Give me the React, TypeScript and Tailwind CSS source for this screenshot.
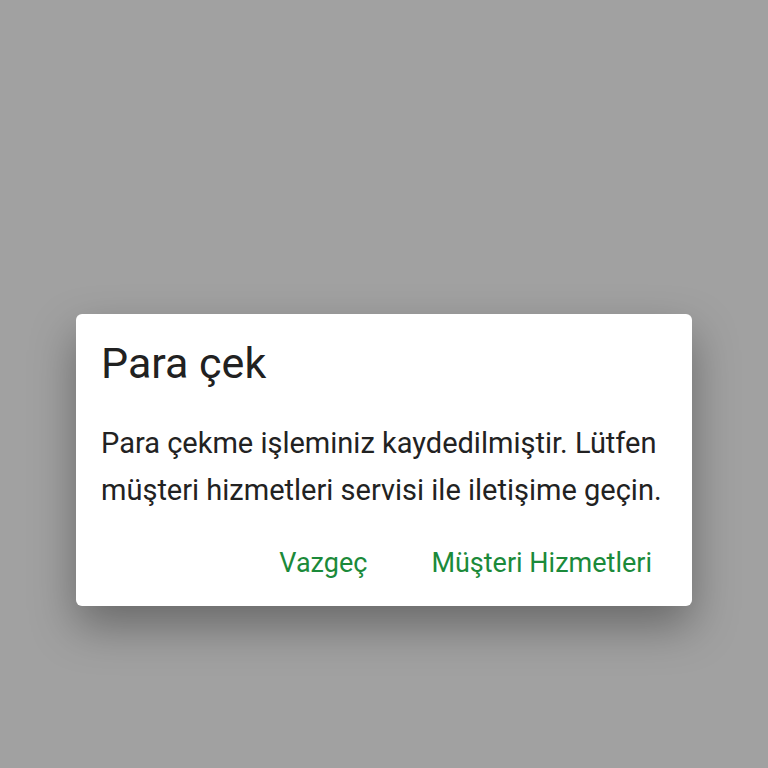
export default function App() {
  return (
    <div className="flex h-screen w-full justify-center bg-[#a1a1a1] pt-[314px] font-['Roboto',sans-serif]">
      <div className="h-fit w-[616px] rounded-[6px] bg-white pb-[25px] shadow-[0_20px_45px_rgba(0,0,0,0.35)]">
        <h2 className="pl-[25px] pt-[24px] text-[43px] leading-[50px] text-[#212121]">Para çek</h2>
        <p className="mt-[32px] pl-[25px] pr-[20px] text-[29px] leading-[47px] text-[#222222]">
          Para çekme işleminiz kaydedilmiştir. Lütfen müşteri hizmetleri servisi ile iletişime geçin.
        </p>
        <div className="mt-[31px] flex justify-end gap-[64px] pr-[40px]">
          <button className="text-[27px] leading-[36px] text-[#1b8a3a]">Vazgeç</button>
          <button className="text-[27px] leading-[36px] text-[#1b8a3a]">Müşteri Hizmetleri</button>
        </div>
      </div>
    </div>
  );
}
